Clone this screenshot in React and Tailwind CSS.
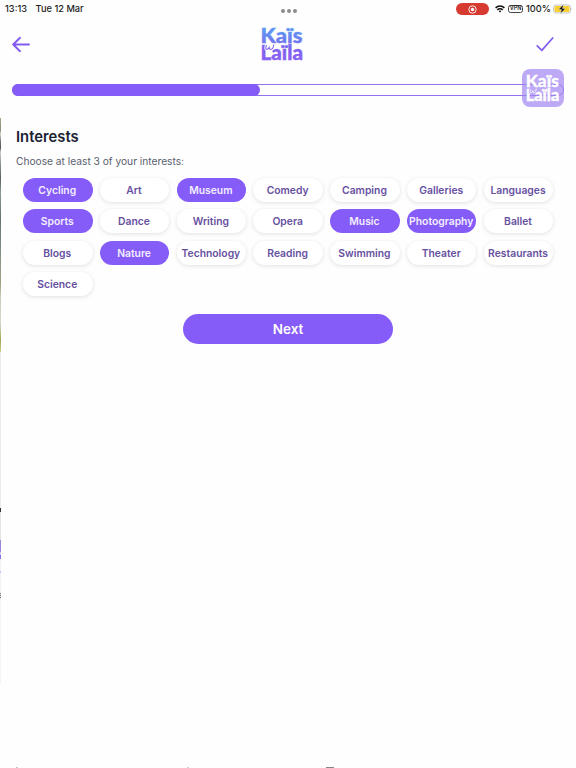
import React from "react";

const interests = [
    "Cycling", "Art", "Museum", "Comedy", "Camping", "Galleries", "Languages",
    "Sports", "Dance", "Writing", "Opera", "Music", "Photography", "Ballet",
    "Blogs", "Nature", "Technology", "Reading", "Swimming", "Theater", "Restaurants",
    "Science",
];

const selected = ["Cycling", "Museum", "Sports", "Music", "Photography", "Nature"];

const Logo = ({ fill, cutout, className }) => (
    <svg className={`overflow-visible ${className}`} viewBox="0 0 42 34" fill={fill}>
        <defs>
            <linearGradient id="logo" gradientUnits="userSpaceOnUse" x1="0" y1="0" x2="0" y2="34">
                <stop offset="0" stopColor="#5b9cf5" />
                <stop offset="0.45" stopColor="#7078ee" />
                <stop offset="0.65" stopColor="#8060f0" />
                <stop offset="1" stopColor="#8a62f4" />
            </linearGradient>
        </defs>
        <g fontFamily="Lato, sans-serif" fontWeight="900" fontSize="20.500" stroke={fill} strokeWidth="0.4">
            <text x="-1.500" y="15.700" textLength="42" lengthAdjust="spacingAndGlyphs">Kaïs</text>
            <text x="-1.500" y="33" textLength="42.500" lengthAdjust="spacingAndGlyphs">Laïla</text>
        </g>
        <g fill="none" strokeLinecap="round">
            <path d="M4.500 18.500c-1 2-1 3.900.3 3.900s2.200-1.500 2.700-2.800c-.5 1.700-.3 2.800.9 2.800 1.700 0 3.100-2.300 3.400-4.700" stroke={cutout} strokeWidth="3" />
            <path d="M4.500 18.500c-1 2-1 3.900.3 3.900s2.200-1.500 2.700-2.800c-.5 1.700-.3 2.800.9 2.800 1.700 0 3.100-2.300 3.400-4.700" stroke={fill} strokeWidth="1.100" />
        </g>
    </svg>
);

const StatusBar = () => {
    return (
        <div className="h-[18px] flex items-center justify-between pl-[5px] pr-[3px] text-[9.25px] font-medium text-[#1c1c1c]">
            <div className="flex flex-1 gap-[8.5px]">
                <span>13:13</span>
                <span>Tue 12 Mar</span>
            </div>
            <div className="flex gap-[2px] pt-[4px]">
                <span className="size-[4px] rounded-full bg-[#8b8b8b]" />
                <span className="size-[4px] rounded-full bg-[#8b8b8b]" />
                <span className="size-[4px] rounded-full bg-[#8b8b8b]" />
            </div>
            <div className="flex flex-1 items-center justify-end">
                <div className="flex h-[12px] w-[33px] items-center justify-center rounded-full bg-[#d63a30]">
                    <svg className="size-[9px]" viewBox="0 0 9 9">
                        <circle cx="4.500" cy="4.500" r="3.700" fill="none" stroke="#fff" strokeWidth="0.9" />
                        <circle cx="4.500" cy="4.500" r="1.700" fill="#fff" />
                    </svg>
                </div>
                <svg className="ml-[6px] h-[8px] w-[10px]" viewBox="0 0 10 8" fill="none" stroke="#111" strokeWidth="1.500">
                    <path d="M.6 2.900a6.200 6.200 0 0 1 8.800 0M2.300 4.900a3.800 3.800 0 0 1 5.400 0" />
                    <path d="M3.600 6.100L5 7.600l1.400-1.500a2 2 0 0 0-2.800 0z" fill="#111" stroke="none" />
                </svg>
                <span className="ml-[3px] flex h-[8px] w-[15px] items-center justify-center rounded-[2.5px] border border-[#444] text-[5.5px] font-semibold leading-none">
                    VPN
                </span>
                <span className="ml-[3px]">100%</span>
                <svg className="ml-[2px] h-[10px] w-[20px]" viewBox="0 0 20 10">
                    <rect x="0.5" y="1" width="17" height="8" rx="2.500" fill="#fff" stroke="#b5b5b5" strokeWidth="0.8" />
                    <rect x="1.500" y="2" width="15" height="6" rx="1.500" fill="#f8cf2d" />
                    <path d="M18.600 3.700q1.200 1.300 0 2.600z" fill="#b5b5b5" />
                    <path d="M10.500.3L5.500 5.600h3L7.400 9.700l5-5.300H9.500z" fill="#111" stroke="#fff" strokeWidth="0.4" />
                </svg>
            </div>
        </div>
    );
};

// sliver of the previous screen still showing on the left edge
const PreviousScreen = () => (
    <div className="absolute left-0 top-[118px] flex w-px flex-col">
        <div className="h-[234px] bg-[linear-gradient(#a9a58a_0px,#8a8b7c_12px,#d5d8d2_16px,#6c716b_24px,#555b56_30px,#c8cec9_34px,#8b948c_46px,#59625b_60px,#8c9890_75px,#66736a_100px,#8a958a_140px,#9ca37f_165px,#c9cdc0_180px,#d6d7cc_205px,#a3a94f_222px,#c8cc93_234px)]" />
        <div className="h-[156px] bg-[#ececec]" />
        <div className="h-[4px] bg-[#333]" />
        <div className="h-[28px] bg-[#e3e3e3]" />
        <div className="h-[12px] bg-[#9c86e0]" />
        <div className="h-[3px] bg-[#d5cdf0]" />
        <div className="h-[4px] bg-[#8c6fe8]" />
        <div className="h-[12px] bg-[#f2f2f2]" />
        <div className="h-[2px] bg-[#c9c0ea]" />
        <div className="h-[20px] bg-[#f2f2f2]" />
        <div className="h-[6px] bg-[repeating-linear-gradient(#777_0px,#777_1px,#ddd_1px,#ddd_2px)]" />
        <div className="h-[85px] bg-[#f4f4f4]" />
    </div>
);

const App = () => {
    return (
        <div className="relative h-[768px] w-[576px] overflow-hidden bg-[#fefefe] font-['Inter',sans-serif]">
            <StatusBar />
            <header className="flex h-[52px] items-center justify-between px-[12px]">
                <svg className="h-[16px] w-[18px]" viewBox="0 0 18 16" fill="none" stroke="#825cf0" strokeWidth="1.900" strokeLinecap="round" strokeLinejoin="round">
                    <path d="M17 8.500H1.200M8 1.800L1.200 8.500 8 15.200" />
                </svg>
                <Logo className="mr-px h-[34px] w-[42px]" fill="url(#logo)" cutout="#fefefe" />
                <svg className="mr-[10px] h-[16px] w-[18px]" viewBox="0 0 18 16" fill="none" stroke="#825cf0" strokeWidth="1.700" strokeLinecap="round" strokeLinejoin="round">
                    <path d="M1.200 9.800L5.800 14.400 16.700 2" />
                </svg>
            </header>

            <div className="relative mx-[12px] mt-[14px] h-[12px] rounded-full border border-[#9472ee]">
                <div className="-ml-px -mt-px h-[12px] w-[248px] rounded-full bg-[#855cf8]" />
                <div className="absolute -top-[16px] -right-[1px] flex h-[38px] w-[42px] items-center justify-center rounded-[8px] bg-[#a184f1]/70">
                    <Logo className="h-[27px] w-[33px]" fill="#fff" cutout="#bda9f5" />
                </div>
            </div>

            <main className="px-[16px] pt-[32px]">
                <h1 className="text-[14.8px] font-semibold leading-[18px] text-[#1c2333]">Interests</h1>
                <p className="mt-[8px] text-[10.2px] leading-[14px] text-[#59616e]">
                    Choose at least 3 of your interests:
                </p>
                <div className="ml-[7px] mt-[10px] grid w-[530.300px] grid-cols-7 gap-x-[7.300px] gap-y-[7.400px]">
                    {interests.map((name) => (
                        <button
                            key={name}
                            className={`flex h-[24px] min-w-0 items-center justify-center whitespace-nowrap rounded-full pt-px pr-px text-[10.350px] font-semibold ${
                                selected.includes(name)
                                    ? "bg-[#855cf8] text-[#f3eefe]"
                                    : "bg-white text-[#67519f] shadow-[0_1px_4px_rgba(0,0,0,0.12)]"
                            }`}
                        >
                            {name}
                        </button>
                    ))}
                </div>
                <button className="mx-auto mt-[18px] flex h-[30px] w-[210px] items-center justify-center rounded-full bg-[#855cf8] text-[13.500px] font-semibold text-white">
                    Next
                </button>
            </main>

            <PreviousScreen />
            <div className="absolute bottom-0 left-[16px] h-px w-[2px] bg-[#c4c4c4]" />
            <div className="absolute bottom-0 left-[187px] h-px w-[2px] bg-[#d0d0d0]" />
            <div className="absolute bottom-0 left-[326px] h-px w-[8px] bg-[#858585]" />
        </div>
    );
};

export default App;
